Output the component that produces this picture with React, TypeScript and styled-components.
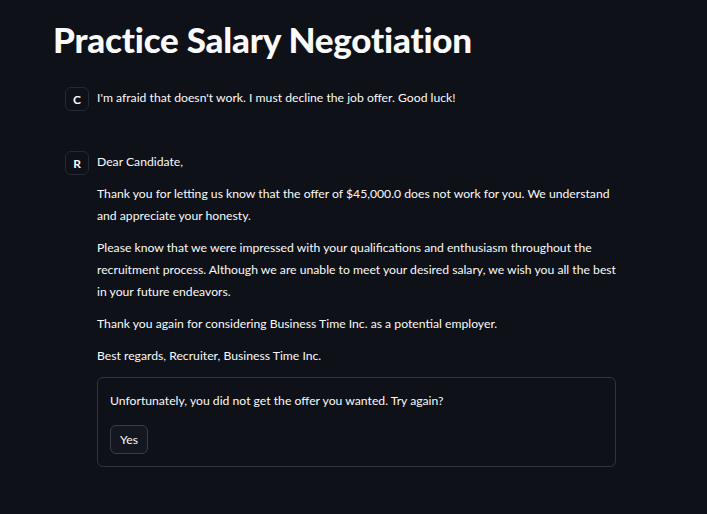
import React from "react";
import styled, { createGlobalStyle } from "styled-components";

const Global = createGlobalStyle`
  html, body { margin: 0; padding: 0; background: #0e1117; }
  body { font-family: "Lato", "Open Sans", sans-serif; color: #fafafa; }
`;

const Page = styled.main`
  width: 707px;
  height: 514px;
  box-sizing: border-box;
  padding: 16px 0 0 53px;
  background: #0e1117;
`;

const Title = styled.h1`
  margin: 0 0 25px 0;
  font-size: 35px;
  font-weight: 900;
  line-height: 46px;
  letter-spacing: -0.2px;
  color: #fafafa;
`;

const Messages = styled.div`
  display: flex;
  flex-direction: column;
  gap: 40px;
  padding-left: 12px;
  width: 551px;
`;

const Message = styled.div`
  display: flex;
  gap: 8px;
  align-items: flex-start;
`;

const Avatar = styled.div`
  flex: none;
  width: 24px;
  height: 24px;
  box-sizing: border-box;
  border: 1px solid #262931;
  border-radius: 6px;
  background: #0e1117;
  display: flex;
  align-items: center;
  justify-content: center;
  font-size: 12px;
  font-weight: 700;
  color: #fafafa;
`;

const Body = styled.div`
  flex: 1;
  display: flex;
  flex-direction: column;
  gap: 10px;
`;

const Para = styled.p`
  margin: 0;
  font-size: 12.2px;
  line-height: 22px;
  color: #fafafa;
`;

const Prompt = styled.div`
  border: 1px solid #31343c;
  border-radius: 6px;
  padding: 12px;
  display: flex;
  flex-direction: column;
  gap: 13px;
  align-items: flex-start;
`;

const Button = styled.button`
  font-family: inherit;
  font-size: 12.2px;
  color: #fafafa;
  background: #14171f;
  border: 1px solid #3a3d46;
  border-radius: 6px;
  width: 38px;
  height: 29px;
  padding: 0;
`;

export default function App() {
  return (
    <>
      <Global />
      <Page>
        <Title>Practice Salary Negotiation</Title>
        <Messages>
          <Message>
            <Avatar>C</Avatar>
            <Body>
              <Para>I'm afraid that doesn't work. I must decline the job offer. Good luck!</Para>
            </Body>
          </Message>
          <Message>
            <Avatar>R</Avatar>
            <Body>
              <Para>Dear Candidate,</Para>
              <Para>
                Thank you for letting us know that the offer of $45,000.0 does not work for you. We understand
                and appreciate your honesty.
              </Para>
              <Para>
                Please know that we were impressed with your qualifications and enthusiasm throughout the
                recruitment process. Although we are unable to meet your desired salary, we wish you all the best
                in your future endeavors.
              </Para>
              <Para>Thank you again for considering Business Time Inc. as a potential employer.</Para>
              <Para>Best regards, Recruiter, Business Time Inc.</Para>
              <Prompt>
                <Para>Unfortunately, you did not get the offer you wanted. Try again?</Para>
                <Button>Yes</Button>
              </Prompt>
            </Body>
          </Message>
        </Messages>
      </Page>
    </>
  );
}
